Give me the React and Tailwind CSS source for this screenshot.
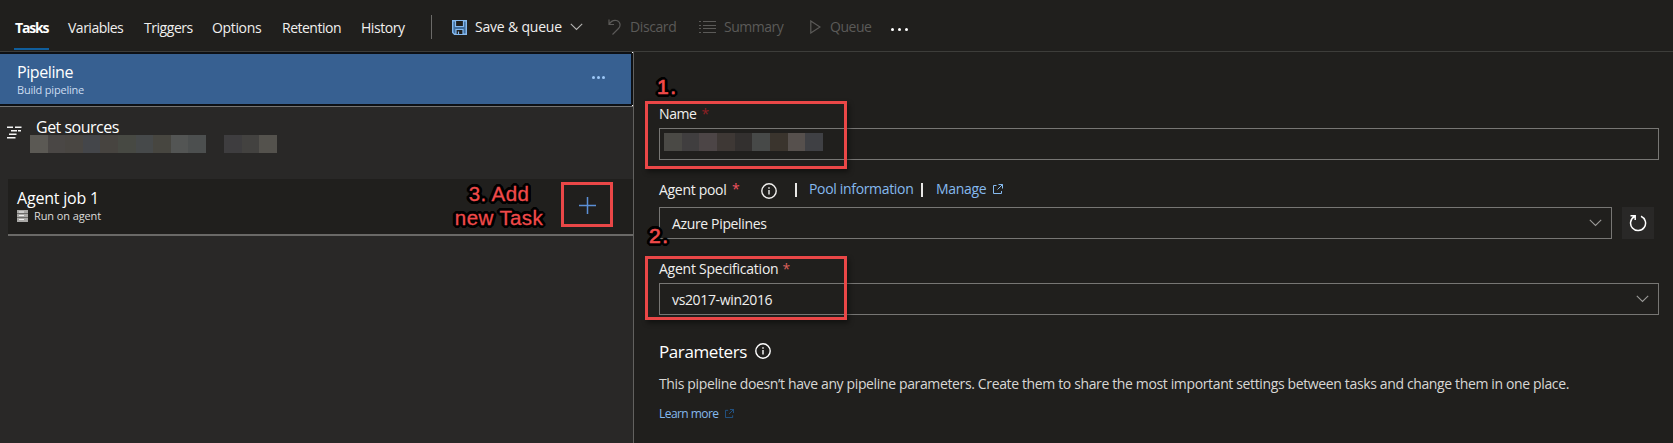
import React from "react";

const External = ({ className }) => (
  <svg viewBox="0 0 10 10" className={className} fill="none" stroke="currentColor">
    <path d="M3.500 1.500H.5v8h8V7M5.500.5h4v4M9.500.5 4.500 5.500" />
  </svg>
);

const Chevron = ({ className }) => (
  <svg viewBox="0 0 13 8" className={className} fill="none" stroke="currentColor" strokeWidth="1.1">
    <path d="M.8.8 6.500 6.500 12.200.8" />
  </svg>
);

const Info = ({ className }) => (
  <svg viewBox="0 0 16 16" className={className} fill="none" stroke="currentColor" strokeWidth="1.4">
    <circle cx="8" cy="8" r="7.2" />
    <path d="M8 7v4.500M8 4.300v1.500" />
  </svg>
);

const tabs = [
  ["Variables", "w-[76px] tracking-[-0.5px]"],
  ["Triggers", "w-[68px] tracking-[-0.45px]"],
  ["Options", "w-[70px] tracking-[-0.35px]"],
  ["Retention", "w-[79px] tracking-[-0.5px]"],
  ["History", "w-[70px] tracking-[-0.45px]"],
];

const sourceName = ["bg-[#5b5954]", "bg-[#4a4745]", "bg-[#494642]", "bg-[#44464a]", "bg-[#474440]", "bg-[#474943]", "bg-[#46494a]", "bg-[#474640]", "bg-[#535554]", "bg-[#4c4f4f]"];
const branchName = ["bg-[#3e3d3f]", "bg-[#434240]", "bg-[#54524d]"];
const pipelineName = ["bg-[#4a4945]", "bg-[#403e3f]", "bg-[#4c4546]", "bg-[#3e3835]", "bg-[#33302f]", "bg-[#474948]", "bg-[#3a342d]", "bg-[#56504d]", "bg-[#3f4044]"];

const Redacted = ({ blocks, className }) => (
  <div className={`flex h-[18px] ${className}`}>
    {blocks.map((c, i) => (
      <div key={i} className={`flex-1 ${c}`} />
    ))}
  </div>
);

const outline =
  "text-[#f04a4a] font-['Liberation_Sans',sans-serif] [text-shadow:3px_0_#000,-3px_0_#000,0_3px_#000,0_-3px_#000,2px_2px_#000,-2px_2px_#000,2px_-2px_#000,-2px_-2px_#000,3px_1px_#000,-3px_1px_#000,3px_-1px_#000,-3px_-1px_#000,1px_3px_#000,-1px_3px_#000,1px_-3px_#000,-1px_-3px_#000,1px_0_#000,-1px_0_#000]";

export default function App() {
  return (
    <div className="relative flex h-[443px] w-[1673px] flex-col overflow-hidden bg-[#201f1d] font-['Open_Sans','Noto_Sans',sans-serif] text-[14px] leading-[20px] whitespace-nowrap text-[#f0efee]">
      <header className="flex h-[52px] shrink-0 items-start border-b border-[#3d3d3a] pl-[14px]">
        <div className="mr-[19px] h-[51px] w-[35px] pt-[18px]">
          <div className="h-[30px] pl-px font-bold tracking-[-1.2px] text-white">Tasks</div>
          <div className="h-[2px] bg-[#105e9c]" />
        </div>
        <nav className="flex pt-[18px]">
          {tabs.map(([t, c]) => (
            <span key={t} className={c}>{t}</span>
          ))}
        </nav>
        <div className="mt-[15px] h-[24px] w-px bg-[#6b6a68]" />
        <div className="mt-[17px] flex h-[20px] w-[176px] items-center pl-[20px]">
          <svg viewBox="0 0 15 15" className="h-[15px] w-[15px]" fill="none" stroke="#86b9ee">
            <path d="M.7.7h13.600v13.600H2.500L.7 12.500z" strokeWidth="1.400" fill="#3f6c9c" />
            <path d="M3.500 1v5.500h8V1M4 14V9.500h7V14M6.500 14v-2.500" strokeWidth="1.200" fill="#201f1d" />
          </svg>
          <span className="ml-[8px] w-[95px] tracking-[-0.2px]">Save &amp; queue</span>
          <Chevron className="h-[8px] w-[13px] text-[#b5b4b2]" />
        </div>
        <div className="mt-[17px] flex h-[20px] items-center text-[#5b5a58]">
          <svg viewBox="0 0 13 16" className="h-[16px] w-[13px]" fill="none" stroke="currentColor" strokeWidth="1.2">
            <path d="M1 .5V5.500H6M1 5.500C3 2 6 1 8.500 1.500 12.500 2.500 13 7 10.500 9.500L4.500 15.500" />
          </svg>
          <span className="ml-[9px] w-[69px] tracking-[-0.4px]">Discard</span>
          <svg viewBox="0 0 17 12" className="h-[12px] w-[17px]" fill="none" stroke="currentColor">
            <path d="M0 .5h2M4 .5h13M0 4.500h2M4 4.500h13M0 7.500h2M4 7.500h13M0 11.500h2M4 11.500h13" />
          </svg>
          <span className="ml-[8px] w-[86px] tracking-[-0.5px]">Summary</span>
          <svg viewBox="0 0 11 14" className="h-[14px] w-[11px]" fill="none" stroke="currentColor" strokeWidth="1.2">
            <path d="M.8 1v12L10 7z" />
          </svg>
          <span className="ml-[9px] w-[61px] tracking-[-0.45px]">Queue</span>
          <div className="mt-[4px] flex gap-[4px]">
            <i className="size-[3px] rounded-full bg-white" />
            <i className="size-[3px] rounded-full bg-white" />
            <i className="size-[3px] rounded-full bg-white" />
          </div>
        </div>
      </header>

      <div className="flex min-h-0 flex-1">
        <aside className="flex w-[634px] shrink-0 flex-col border-r border-[#62615f] bg-[#292827]">
          <div className="relative flex h-[54px] items-start justify-between border-y-2 border-r-2 border-[#0d1014] bg-[#376091]">
            <div className="pt-[7px] pl-[17px]">
              <div className="text-[16px] leading-[22px] tracking-[-0.4px] text-white">Pipeline</div>
              <div className="text-[11px] leading-[14px] tracking-[-0.2px] text-[#cbdcf0]">Build pipeline</div>
            </div>
            <div className="mt-[22px] mr-[26px] flex gap-[2px]">
              <i className="size-[3px] rounded-full bg-[#9dc8f8]" />
              <i className="size-[3px] rounded-full bg-[#9dc8f8]" />
              <i className="size-[3px] rounded-full bg-[#9dc8f8]" />
            </div>
            <i className="absolute -top-[2px] -right-[2px] size-px bg-white" />
            <i className="absolute -right-[2px] -bottom-[2px] size-px bg-white" />
          </div>
          <div className="h-[73px] border-t border-[#757472] pt-[8px]">
            <div className="flex h-[20px] items-center pl-[7px]">
              <svg viewBox="0 0 15 13" className="mt-[14px] h-[13px] w-[15px]" stroke="#f5f5f5" strokeWidth="1.500">
                <path d="M0 1.200h6M8 1.200h6.500M4 4.800h6M11 4.800h3M2 8.200h7.500M0 11.700h8.500" />
              </svg>
              <span className="mt-[4px] ml-[14px] text-[16px] leading-[22px] tracking-[-0.5px] text-white">Get sources</span>
            </div>
            <div className="flex gap-[18px] pl-[30px]">
              <Redacted blocks={sourceName} className="w-[176px]" />
              <Redacted blocks={branchName} className="w-[53px]" />
            </div>
          </div>
          <div className="ml-[8px] flex h-[57px] justify-between border-b-2 border-[#6a6967] bg-[#201f1d] pl-[9px]">
            <div className="pt-[9px]">
              <div className="text-[16px] leading-[21px] tracking-[-0.2px] text-white">Agent job 1</div>
              <div className="flex h-[14px] items-center text-[11px] text-[#dddcda]">
                <svg viewBox="0 0 11 12" className="mr-[6px] h-[12px] w-[11px]">
                  <path d="M0 0h11v12H0z" fill="#a9a8a6" />
                  <path d="M0 3.500h11M0 7.500h11" stroke="#6a6967" />
                  <path d="M2 2h5M2 5.500h5M2 9.500h5" stroke="#eee" />
                </svg>
                <span className="tracking-[-0.1px]">Run on agent</span>
              </div>
            </div>
            <svg viewBox="0 0 17 17" className="mt-[18px] mr-[37px] h-[17px] w-[17px]" stroke="#5b8fd6" strokeWidth="1.500">
              <path d="M8.500 0v17M0 8.500h17" />
            </svg>
          </div>
        </aside>

        <main className="flex w-[1039px] flex-col pl-[25px]">
          <div className="mt-[52px] h-[24px]">
            <span className="tracking-[-0.4px]">Name</span>
            <span className="ml-[5px] text-[#8f1f24]">*</span>
          </div>
          <div className="h-[32px] w-[1000px] border border-[#777674] pt-[4px] pl-[4px]">
            <Redacted blocks={pipelineName} className="w-[159px]" />
          </div>
          <div className="flex h-[47px] items-start pt-[19px]">
            <span className="w-[73px] pt-[1px] tracking-[-0.3px]">Agent pool</span>
            <span className="w-[29px] text-[#f0525f]">*</span>
            <Info className="mt-[4px] h-[16px] w-[16px]" />
            <div className="mt-[4px] ml-[18px] h-[14px] w-[2px] bg-[#e8e7e6]" />
            <span className="ml-[12px] w-[112px] tracking-[-0.33px] text-[#85b9ee]">Pool information</span>
            <div className="mt-[4px] h-[14px] w-[2px] bg-[#e8e7e6]" />
            <span className="ml-[13px] w-[57px] tracking-[-0.3px] text-[#85b9ee]">Manage</span>
            <External className="mt-[5px] h-[10px] w-[10px] text-[#85b9ee]" />
          </div>
          <div className="flex gap-[10px]">
            <div className="flex h-[32px] w-[953px] items-center justify-between border border-[#777674] pr-[9px] pl-[12px]">
              <span className="pt-px tracking-[-0.35px]">Azure Pipelines</span>
              <Chevron className="h-[8px] w-[13px] text-[#9a9997]" />
            </div>
            <div className="flex size-[32px] items-center justify-center bg-[#292827]">
              <svg viewBox="0 0 18 18" className="size-[18px]" fill="none" stroke="#fff" strokeWidth="1.500">
                <path d="M12 2.200A7.500 7.500 0 1 1 5.500 2.500M1.500 1.700H6.200V6" />
              </svg>
            </div>
          </div>
          <div className="mt-[20px] h-[24px]">
            <span className="tracking-[-0.25px]">Agent Specification</span>
            <span className="ml-[4px] text-[#d9605a]">*</span>
          </div>
          <div className="flex h-[32px] w-[1000px] items-center justify-between border border-[#777674] pr-[9px] pl-[12px]">
            <span className="pt-px tracking-[-0.35px]">vs2017-win2016</span>
            <Chevron className="h-[8px] w-[13px] text-[#9a9997]" />
          </div>
          <div className="mt-[25px] flex h-[24px] items-start text-white">
            <span className="w-[96px] text-[17px] leading-[24px] tracking-[-0.4px]">Parameters</span>
            <Info className="mt-[3px] h-[16px] w-[16px]" />
          </div>
          <div className="mt-[10px] h-[20px] tracking-[-0.363px] text-[#d8d7d5]">
            This pipeline doesn’t have any pipeline parameters. Create them to share the most important settings between tasks and change them in one place.
          </div>
          <div className="mt-[10px] flex h-[18px] items-start text-[12px] leading-[18px] text-[#85b9ee]">
            <span className="w-[66px] pt-px tracking-[-0.55px]">Learn more</span>
            <External className="mt-[5px] h-[9px] w-[9px] text-[#22598f]" />
          </div>
        </main>
      </div>

      <div className="absolute top-[182px] left-[561px] h-[45px] w-[52px] border-3 border-[#ea4747]" />
      <div className="absolute top-[101px] left-[645px] h-[68px] w-[202px] border-3 border-[#ea4747] shadow-[2px_3px_5px_rgba(0,0,0,0.45)]" />
      <div className="absolute top-[256px] left-[645px] h-[64px] w-[202px] border-3 border-[#ea4747] shadow-[2px_3px_5px_rgba(0,0,0,0.45)]" />
      <div className={`absolute top-[182px] left-[449px] w-[100px] text-center text-[20.5px] leading-[24px] tracking-[0.4px] [-webkit-text-stroke:0.3px_#f04a4a] ${outline}`}>
        3. Add<br />new Task
      </div>
      <div className={`absolute top-[75px] left-[657px] text-[21px] leading-[24px] tracking-[1.5px] [-webkit-text-stroke:0.7px_#f04a4a] ${outline}`}>1.</div>
      <div className={`absolute top-[224px] left-[649px] text-[21px] leading-[24px] tracking-[1.5px] [-webkit-text-stroke:0.7px_#f04a4a] ${outline}`}>2.</div>
    </div>
  );
}
